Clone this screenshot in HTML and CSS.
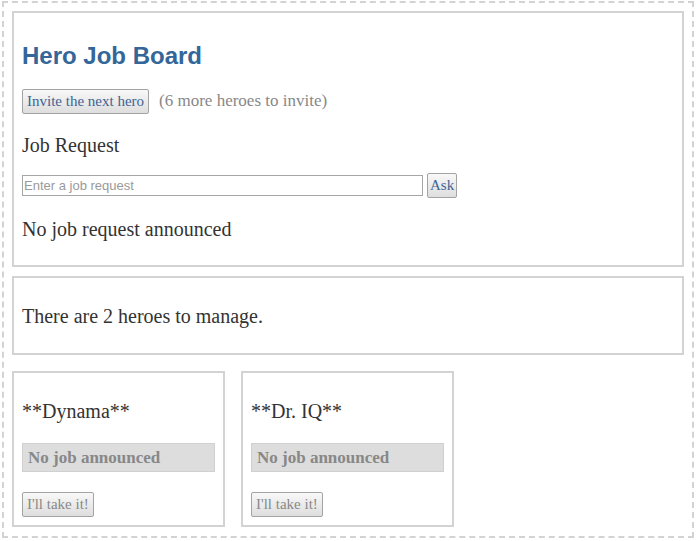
FILE: index.html
```html
<!DOCTYPE html>
<html>
<head>
<meta charset="utf-8">
<title>Hero Job Board</title>
<link rel="stylesheet" href="styles.css">
</head>
<body>
<div class="app">
  <section class="panel board">
    <h1 class="title">Hero Job Board</h1>
    <div class="invite-row">
      <button class="btn">Invite the next hero</button>
      <span class="remaining">(6 more heroes to invite)</span>
    </div>
    <h2 class="subtitle">Job Request</h2>
    <div class="ask-row">
      <input class="job-input" type="text" placeholder="Enter a job request">
      <button class="btn btn-sm">Ask</button>
    </div>
    <p class="text last">No job request announced</p>
  </section>
  <section class="panel manage">
    <p class="text">There are 2 heroes to manage.</p>
  </section>
  <div class="heroes">
    <div class="hero-card">
      <p class="text hero-name">**Dynama**</p>
      <div class="job-status">No job announced</div>
      <button class="btn" disabled>I'll take it!</button>
    </div>
    <div class="hero-card">
      <p class="text hero-name">**Dr. IQ**</p>
      <div class="job-status">No job announced</div>
      <button class="btn" disabled>I'll take it!</button>
    </div>
  </div>
</div>
</body>
</html>
```

FILE: styles.css
```css
html, body {
  margin: 0;
  padding: 0;
  background: #fff;
}

body {
  font-family: "Liberation Serif", "Times New Roman", serif;
  color: #333;
}

.app {
  margin: 1px 3px 3px 2px;
  border: 2px dashed #d3d3d3;
  padding: 8px 8px 9px 8px;
}

.panel {
  border: 2px solid #d3d3d3;
  padding: 8px;
}

.manage {
  margin-top: 9px;
}

.title {
  margin: 21px 0 0;
  font-family: "Liberation Sans", Arial, sans-serif;
  font-size: 24px;
  line-height: 28px;
  font-weight: bold;
  color: #336699;
}

.invite-row {
  margin-top: 19px;
  display: flex;
  align-items: baseline;
  gap: 10px;
}

.remaining {
  font-size: 17px;
  color: #888;
}

.btn {
  font-family: "Liberation Serif", "Times New Roman", serif;
  font-size: 15px;
  line-height: 17px;
  color: #3e6494;
  padding: 3px 4px;
  border: 1px solid #a3a3a3;
  border-radius: 2px;
  background: linear-gradient(#f8f8f8, #dedede);
  margin: 0;
}

.btn:disabled {
  color: #888;
}

.btn-sm {
  padding: 3px 2px;
}

.subtitle {
  margin: 20px 0 0;
  font-size: 20px;
  line-height: 23px;
  font-weight: normal;
}

.ask-row {
  margin-top: 16px;
  display: flex;
  align-items: center;
  gap: 4px;
}

.job-input {
  box-sizing: border-box;
  width: 401px;
  height: 21px;
  margin: 0;
  padding: 0 1px;
  border: 1px solid #a6a6a6;
  font-family: "Liberation Sans", Arial, sans-serif;
  font-size: 13px;
  color: #333;
}

.job-input::placeholder {
  color: #9a9a9a;
}

.text {
  margin: 19px 0 17px;
  font-size: 20px;
  line-height: 23px;
}

.text.last {
  margin: 20px 0 16px;
}

.heroes {
  margin-top: 16px;
  display: flex;
  gap: 16px;
}

.hero-card {
  width: 213px;
  box-sizing: border-box;
  border: 2px solid #d3d3d3;
  padding: 8px;
}

.hero-name {
  margin: 19px 0 20px;
}

.job-status {
  background: #dddddd;
  border: 1px solid #d0d0d0;
  padding: 4px 5px;
  font-size: 17px;
  line-height: 19px;
  font-weight: bold;
  color: #888;
  margin-bottom: 20px;
}
```
